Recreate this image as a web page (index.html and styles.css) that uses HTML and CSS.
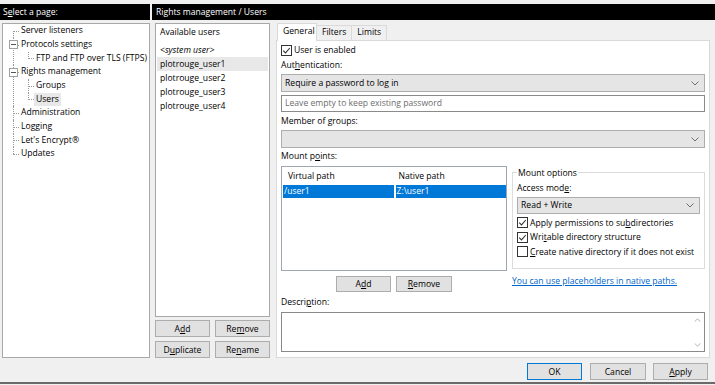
FILE: index.html
```html
<!DOCTYPE html>
<html>

<head>
  <meta charset="UTF-8">
  <title>Rights management / Users</title>
  <link rel="stylesheet" href="styles.css">
</head>

<body>
  <div class="window">
    <div class="main">
      <div class="sidebar">
        <div class="bar">S<u>e</u>lect a page:</div>
        <div class="tree">
          <ul class="root">
            <li><span class="label">Server listeners</span></li>
            <li><span class="toggle"></span><span class="label">Protocols settings</span>
              <ul>
                <li><span class="label">FTP and FTP over TLS (FTPS)</span></li>
              </ul>
            </li>
            <li><span class="toggle"></span><span class="label">Rights management</span>
              <ul>
                <li><span class="label">Groups</span></li>
                <li><span class="label selected">Users</span></li>
              </ul>
            </li>
            <li><span class="label">Administration</span></li>
            <li><span class="label">Logging</span></li>
            <li><span class="label">Let's Encrypt®</span></li>
            <li><span class="label">Updates</span></li>
          </ul>
        </div>
      </div>

      <div class="content">
        <div class="bar">Rights management / Users</div>
        <div class="body-row">
          <div class="users">
            <div class="user-list">
              <div class="list-head">Available users</div>
              <div class="list-rows">
                <div class="user system">&lt;system user&gt;</div>
                <div class="user on">plotrouge_user1</div>
                <div class="user">plotrouge_user2</div>
                <div class="user">plotrouge_user3</div>
                <div class="user">plotrouge_user4</div>
              </div>
            </div>
            <div class="btn-grid">
              <a href="javascript:;" class="btn"><span>A<u>d</u>d</span></a>
              <a href="javascript:;" class="btn"><span>Re<u>m</u>ove</span></a>
              <a href="javascript:;" class="btn"><span>D<u>u</u>plicate</span></a>
              <a href="javascript:;" class="btn"><span>Re<u>n</u>ame</span></a>
            </div>
          </div>

          <div class="editor">
            <div class="tabs">
              <span class="tab active">General</span>
              <span class="tab">Filters</span>
              <span class="tab">Limits</span>
            </div>
            <div class="panel">
              <label class="check">
                <svg class="cb" viewBox="0 0 11 11"><rect x="0.5" y="0.5" width="10" height="10" fill="#fff" stroke="#333"/><path d="M2.2 5.6 L4.5 7.9 L8.8 3" fill="none" stroke="#333" stroke-width="1.1"/></svg>
                <span>User is enabled</span>
              </label>
              <div class="field-label">Aut<u>h</u>entication:</div>
              <div class="select">
                <span>Require a password to log in</span>
                <svg class="chev" viewBox="0 0 8 5"><path d="M0.5 0.5 L4 4 L7.5 0.5" fill="none" stroke="#707070"/></svg>
              </div>
              <div class="input">Leave empty to keep existing password</div>
              <div class="field-label">Member of <u>g</u>roups:</div>
              <div class="select">
                <span></span>
                <svg class="chev" viewBox="0 0 8 5"><path d="M0.5 0.5 L4 4 L7.5 0.5" fill="none" stroke="#707070"/></svg>
              </div>
              <div class="field-label tight">Mount p<u>o</u>ints:</div>

              <div class="mount-row">
                <div class="mount-left">
                  <div class="table">
                    <div class="t-head">
                      <span class="col-a">Virtual path</span>
                      <span class="col-b">Native path</span>
                    </div>
                    <div class="t-row">
                      <span class="col-a">/user1</span>
                      <span class="col-b">Z:\user1</span>
                    </div>
                  </div>
                  <div class="mount-btns">
                    <a href="javascript:;" class="btn"><span>A<u>d</u>d</span></a>
                    <a href="javascript:;" class="btn"><span><u>R</u>emove</span></a>
                  </div>
                </div>
                <div class="mount-right">
                  <fieldset class="group">
                    <legend>Mount options</legend>
                    <div class="field-label">Access mod<u>e</u>:</div>
                    <div class="select small">
                      <span>Read + Write</span>
                      <svg class="chev" viewBox="0 0 8 5"><path d="M0.5 0.5 L4 4 L7.5 0.5" fill="none" stroke="#707070"/></svg>
                    </div>
                    <label class="check opt">
                      <svg class="cb" viewBox="0 0 11 11"><rect x="0.5" y="0.5" width="10" height="10" fill="#fff" stroke="#333"/><path d="M2.2 5.6 L4.5 7.9 L8.8 3" fill="none" stroke="#333" stroke-width="1.1"/></svg>
                      <span>Apply permissions to su<u>b</u>directories</span>
                    </label>
                    <label class="check opt">
                      <svg class="cb" viewBox="0 0 11 11"><rect x="0.5" y="0.5" width="10" height="10" fill="#fff" stroke="#333"/><path d="M2.2 5.6 L4.5 7.9 L8.8 3" fill="none" stroke="#333" stroke-width="1.1"/></svg>
                      <span>Wri<u>t</u>able directory structure</span>
                    </label>
                    <label class="check opt">
                      <svg class="cb" viewBox="0 0 11 11"><rect x="0.5" y="0.5" width="10" height="10" fill="#fff" stroke="#333"/></svg>
                      <span><u>C</u>reate native directory if it does not exist</span>
                    </label>
                  </fieldset>
                  <a href="javascript:;" class="link">You can use placeholders in native paths.</a>
                </div>
              </div>

              <div class="field-label desc">Descri<u>p</u>tion:</div>
              <div class="textarea">
                <div class="scroll">
                  <svg viewBox="0 0 8 5"><path d="M0.5 4.5 L4 1 L7.5 4.5" fill="none" stroke="#a0a0a0"/></svg>
                  <svg viewBox="0 0 8 5"><path d="M0.5 0.5 L4 4 L7.5 0.5" fill="none" stroke="#a0a0a0"/></svg>
                </div>
              </div>
            </div>
          </div>
        </div>
      </div>
    </div>

    <div class="footer">
      <a href="javascript:;" class="btn default">OK</a>
      <a href="javascript:;" class="btn cancel">Cancel</a>
      <a href="javascript:;" class="btn"><span><u>A</u>pply</span></a>
    </div>
    <div class="bottom-line"></div>
  </div>
</body>

</html>
```

FILE: styles.css
```css
* {
  margin: 0;
  padding: 0;
  box-sizing: border-box;
}

a {
  text-decoration: none;
  color: #000;
}

ul {
  list-style: none;
}

body {
  width: 715px;
  height: 385px;
  overflow: hidden;
  background-color: #f0f0f0;
  font-family: "Open Sans", "Noto Sans", sans-serif;
  font-size: 8.6px;
  color: #000;
}

.window {
  display: flex;
  flex-direction: column;
  height: 385px;
  padding-top: 4px;
}

.main {
  display: flex;
  height: 354px;
  gap: 2px;
}

.bar {
  height: 16px;
  line-height: 16px;
  padding-left: 3px;
  background-color: #000;
  color: #fff;
  white-space: nowrap;
}

/* left tree */
.sidebar {
  width: 150px;
  display: flex;
  flex-direction: column;
}

.tree {
  margin: 3px 0 0 2px;
  height: 335px;
  background-color: #fff;
  border: 1px solid #a8a8a8;
  padding-top: 0.2px;
}

.tree li {
  position: relative;
  padding-left: 18px;
}

.tree .label {
  display: inline-block;
  height: 13.7px;
  line-height: 13.7px;
  white-space: nowrap;
  padding: 0 2px;
  margin-left: -2px;
}

.tree .label.selected {
  background-color: #e8e8e8;
}

.tree li::before {
  content: "";
  position: absolute;
  left: 10px;
  top: 6.8px;
  width: 6px;
  border-top: 1px dotted #9a9a9a;
}

.tree li::after {
  content: "";
  position: absolute;
  left: 10px;
  top: 0;
  bottom: 0;
  border-left: 1px dotted #9a9a9a;
}

.tree .root > li:first-child::after {
  top: 6.8px;
}

.tree li:last-child::after {
  bottom: auto;
  height: 7px;
}

.tree li ul {
  margin-left: -3px;
}

.tree .toggle {
  position: absolute;
  left: 6px;
  top: 2.5px;
  width: 9px;
  height: 9px;
  background-color: #fff;
  border: 1px solid #a0a0a0;
  z-index: 1;
}

.tree .toggle::after {
  content: "";
  position: absolute;
  left: 1px;
  top: 3px;
  width: 5px;
  border-top: 1px solid #555;
}

/* right side */
.content {
  flex: 1;
  display: flex;
  flex-direction: column;
}

.content .bar {
  padding-left: 4px;
}

.body-row {
  display: flex;
  margin-top: 3px;
  gap: 6px;
}

.users {
  width: 115px;
  margin-left: 3px;
  display: flex;
  flex-direction: column;
}

.user-list {
  height: 294px;
  background-color: #fff;
  border: 1px solid #a8a8a8;
}

.list-head {
  height: 16px;
  line-height: 16px;
  padding-left: 4px;
}

.list-rows {
  margin-top: 3px;
}

.user {
  height: 14px;
  line-height: 14px;
  margin: 0 1px;
  padding-left: 3px;
}

.user.system {
  font-style: italic;
}

.user.on {
  background-color: #e8e8e8;
}

.btn {
  display: flex;
  align-items: center;
  justify-content: center;
  height: 17px;
  background-color: #e1e1e1;
  border: 1px solid #adadad;
  white-space: nowrap;
}

.btn-grid {
  display: grid;
  grid-template-columns: 55px 55px;
  column-gap: 5px;
  row-gap: 4px;
  margin-top: 3px;
}

.editor {
  width: 434px;
  display: flex;
  flex-direction: column;
}

.tabs {
  display: flex;
  align-items: flex-end;
  height: 17px;
  padding-left: 1px;
}

.tab {
  height: 15px;
  line-height: 13px;
  padding: 0 5px;
  border: 1px solid #d9d9d9;
  border-bottom: none;
  border-left: none;
  background-color: #f0f0f0;
}

.tab.active {
  height: 18px;
  line-height: 15px;
  margin-bottom: -1px;
  background-color: #fff;
  border-left: 1px solid #d9d9d9;
  width: 40px;
  position: relative;
  z-index: 1;
}

.panel {
  height: 318px;
  background-color: #fff;
  border: 1px solid #d9d9d9;
  padding: 2px 4px 0 4px;
}

.check {
  display: flex;
  align-items: center;
  gap: 2px;
  height: 14px;
  white-space: nowrap;
}

.cb {
  width: 11px;
  height: 11px;
  flex: none;
}

.field-label {
  height: 14px;
  line-height: 14px;
  margin-top: 1px;
  white-space: nowrap;
}

.select {
  display: flex;
  align-items: center;
  justify-content: space-between;
  height: 18px;
  margin-top: 2px;
  padding: 0 5px 0 3px;
  background-color: #e5e5e5;
  border: 1px solid #adadad;
}

.chev {
  width: 8px;
  height: 5px;
}

.input {
  height: 17px;
  line-height: 15px;
  margin-top: 3px;
  padding-left: 3px;
  border: 1px solid #8a8a8a;
  color: #6d6d6d;
}

.input + .field-label {
  margin-top: 2px;
}

.mount-row {
  display: flex;
  gap: 5px;
  margin-top: 3px;
}

.mount-left {
  width: 226px;
}

.table {
  height: 105px;
  border: 1px solid #a0a6b0;
  padding: 0 0 0 1px;
}

.t-head,
.t-row {
  display: flex;
  gap: 2px;
}

.t-head {
  height: 18px;
  line-height: 18px;
}

.col-a {
  width: 111px;
}

.col-b {
  width: 111px;
}

.t-head .col-a {
  padding-left: 5px;
}

.t-head .col-b {
  padding-left: 3px;
}

.t-row span {
  height: 13px;
  line-height: 13px;
  padding-left: 1px;
  background-color: #0078d7;
  color: #fff;
}

.mount-btns {
  display: flex;
  justify-content: center;
  gap: 5px;
  margin-top: 5px;
}

.mount-btns .btn {
  width: 55px;
  height: 16px;
}

.mount-btns .btn + .btn {
  width: 56px;
}

.mount-right {
  width: 193px;
  display: flex;
  flex-direction: column;
}

.group {
  height: 103px;
  border: 1px solid #dcdcdc;
  padding: 0 4px 0 4px;
  margin-top: -0.5px;
}

.group legend {
  padding: 0 1px;
  margin-left: 0;
  line-height: 14px;
}

.group .field-label {
  margin-top: 1px;
}

.select.small {
  height: 17px;
  margin-top: 2px;
}

.check.opt {
  height: 14.5px;
  gap: 2px;
}

.select.small + .check.opt {
  margin-top: 2px;
}

.link {
  margin-top: 6px;
  color: #0066cc;
  text-decoration: underline;
  white-space: nowrap;
}

.field-label.desc {
  margin-top: 3px;
}

.textarea {
  display: flex;
  justify-content: flex-end;
  height: 40px;
  margin-top: 3px;
  border: 1px solid #8a8a8a;
}

.scroll {
  width: 14px;
  display: flex;
  flex-direction: column;
  justify-content: space-between;
  align-items: center;
  padding: 5px 0 4px;
}

.scroll svg {
  width: 7px;
  height: 4px;
}

/* footer buttons */
.footer {
  display: flex;
  justify-content: flex-end;
  gap: 7px;
  margin-top: 5px;
  padding-right: 7px;
}

.footer .btn {
  width: 55px;
}

.footer .btn.cancel {
  width: 56px;
  margin-left: 1px;
}

.footer .btn.default {
  border-color: #0078d7;
}

.bottom-line {
  height: 2px;
  margin-top: 2px;
  background-color: #6a6a6a;
}
```
